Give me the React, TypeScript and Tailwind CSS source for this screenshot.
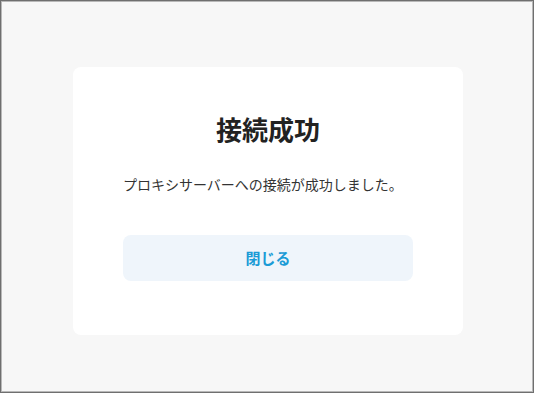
import React from "react";

const App: React.FC = () => {
  return (
    <div
      className="h-[393px] w-[534px] border border-[#6f6f6f] bg-[#f7f7f7]"
      style={{ fontFamily: '"Noto Sans CJK JP", "Noto Sans", sans-serif' }}
    >
      <div className="h-full w-full border border-[#b8b8b8] flex justify-center pt-[65px] pl-[2px]">
        <div className="w-[390px] h-[268px] rounded-[8px] bg-white px-[50px] pt-[44px] flex flex-col">
          <h1 className="text-center text-[26px] leading-[36px] font-bold text-[#222]">
            接続成功
          </h1>
          <p className="mt-[27px] text-[14px] leading-[20px] text-[#333]">
            プロキシサーバーへの接続が成功しました。
          </p>
          <button className="mt-[41px] h-[46px] w-full rounded-[8px] bg-[#eff5fb] text-[15px] font-bold text-[#1b9bd6]">
            閉じる
          </button>
        </div>
      </div>
    </div>
  );
};

export default App;
